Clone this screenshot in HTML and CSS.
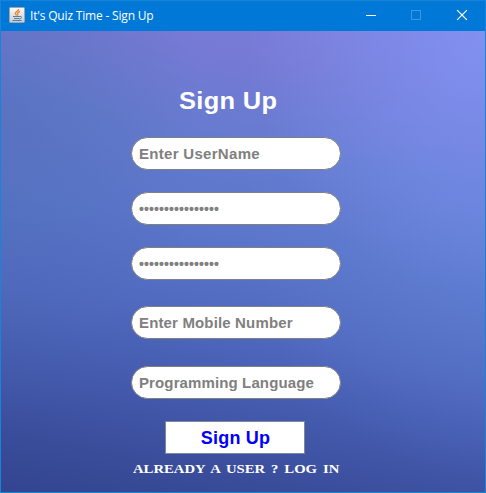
FILE: index.html
```html
<!DOCTYPE html>
<html lang="en">
<head>
<meta charset="utf-8">
<title>It's Quiz Time - Sign Up</title>
<link rel="stylesheet" href="styles.css">
</head>
<body>
<div class="window">
  <header class="titlebar">
    <svg class="app-icon" viewBox="0 0 16 16">
      <defs><linearGradient id="tile" x2="0" y2="1"><stop stop-color="#fafafa"/><stop offset="1" stop-color="#c9cccd"/></linearGradient></defs>
      <rect x=".5" y=".5" width="15" height="15" rx="1" fill="url(#tile)" stroke="#9aa5ad"/>
      <path d="M9.800 2C10 4 6 4.600 6.300 6.500c.1.700 1 1.200 1.300 2M11 4.300c-1.500.7-2.800 1.300-2.500 2.300.2.700.9.900-.1 1.900" fill="none" stroke="#e88631" stroke-width="1.300"/>
      <path d="M4 9.500h7M5 11.500h5.500M3.500 13.500h9M11 9.500c2-.6 2.200 1.800-.5 2.700" fill="none" stroke="#557f9f" stroke-width="1"/>
    </svg>
    <span class="caption">It's Quiz Time - Sign Up</span>
    <svg class="controls" viewBox="0 0 138 30" fill="none">
      <path d="M19 14.500h10" stroke="#fff"/>
      <rect x="64.500" y="9.500" width="9" height="9" stroke="#3c98e2"/>
      <path d="M110.500 9.500l9 9M119.500 9.500l-9 9" stroke="#fff" stroke-width="1.100" stroke-linecap="square"/>
    </svg>
  </header>
  <main class="content">
    <h1>Sign Up</h1>
    <form class="form">
      <div class="field name">Enter UserName</div>
      <div class="field password"><span class="dots">••••••••••••••••</span></div>
      <div class="field password"><span class="dots">••••••••••••••••</span></div>
      <div class="field mobile">Enter Mobile Number</div>
      <div class="field language">Programming Language</div>
      <button type="button" class="submit">Sign Up</button>
      <a class="login">ALREADY A USER ? LOG IN</a>
    </form>
  </main>
</div>
</body>
</html>
```
FILE: styles.css
```css
* { box-sizing: border-box; }
body { margin: 0; overflow: hidden; }
.window {
  width: 486px;
  height: 493px;
  border: 1px solid #1883d7;
  display: flex;
  flex-direction: column;
  font-family: "Liberation Sans", Arial, sans-serif;
}
.titlebar {
  height: 30px;
  flex: none;
  display: flex;
  align-items: center;
  padding-left: 8px;
  background: #0078d7;
  color: #fff;
}
.app-icon { width: 16px; height: 16px; margin-top: -2px; }
.caption {
  margin-left: 5px;
  font: 12px/16px "Open Sans", "Noto Sans", sans-serif;
  letter-spacing: -0.18px;
  white-space: nowrap;
}
.controls { width: 138px; height: 30px; margin-left: auto; }
.content {
  flex: 1;
  min-height: 0;
  padding: 55px 0 0 130px;
  background:
    radial-gradient(ellipse 240px 260px at 100% 0, rgba(132, 148, 245, .8), rgba(120, 145, 235, 0)),
    radial-gradient(ellipse 240px 260px at 100% 40%, rgba(100, 135, 222, .5), rgba(100, 135, 222, 0)),
    radial-gradient(ellipse 200px 300px at 0 20%, rgba(78, 108, 180, .5), rgba(78, 108, 180, 0)),
    linear-gradient(191deg, #7e7edb 0%, #767ad4 13%, #667bcf 28%, #5b76ca 45%, #506abf 61%, #445aad 76%, #3a4d9b 89%, #33458f 100%);
}
h1 {
  align-self: flex-start;
  margin: 0 0 22px 48px;
  font-size: 24px;
  line-height: 29px;
  letter-spacing: .3px;
  color: #fff;
  transform: scaleX(1.06);
  transform-origin: left;
}
.form {
  width: 210px;
  display: flex;
  flex-direction: column;
}
.field {
  height: 33px;
  margin-bottom: 22px;
  padding-left: 7px;
  border: 1px solid #808080;
  border-radius: 17px;
  background: #fff;
  color: #808080;
  font-size: 15px;
  font-weight: bold;
  line-height: 31px;
  letter-spacing: .3px;
  white-space: nowrap;
}
.dots {
  display: block;
  font-size: 14px;
  line-height: 32px;
  letter-spacing: .1px;
}
.password + .password { margin-bottom: 26px; }
.mobile { margin-bottom: 27px; letter-spacing: .15px; }
.language { letter-spacing: .12px; }
.submit {
  width: 140px;
  height: 33px;
  margin: 0 0 0 34px;
  padding: 1px 0 0 1px;
  border: 1px solid #7a8a99;
  background: #fff;
  color: #00f;
  font: bold 18px "Liberation Sans", Arial, sans-serif;
  letter-spacing: .2px;
}
.login {
  align-self: flex-start;
  margin: 5px 0 0 2px;
  color: #fff;
  font: bold 13px/20px "Liberation Serif", serif;
  word-spacing: 2px;
  white-space: nowrap;
  transform: scaleX(1.13);
  transform-origin: left;
}
```
